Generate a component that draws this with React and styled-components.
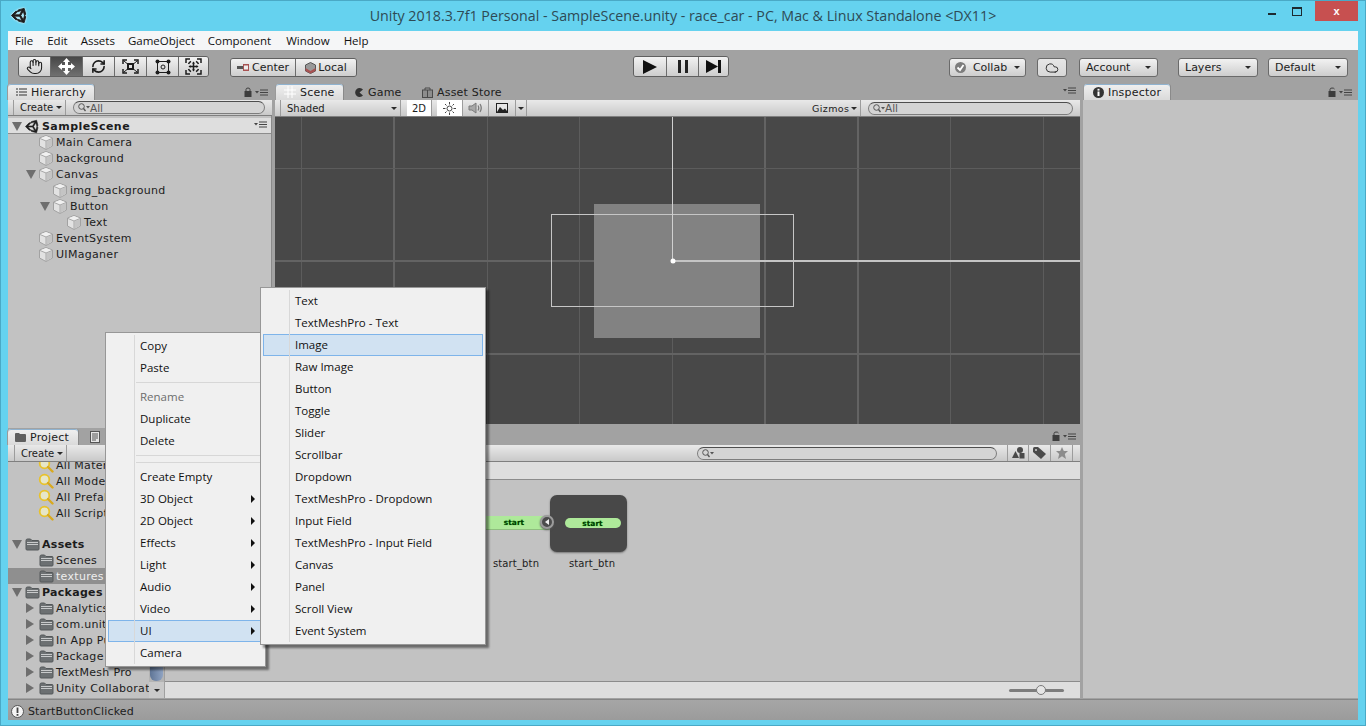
import styled, { createGlobalStyle } from "styled-components";
import { FaUnity } from "react-icons/fa";
import { Hand, RefreshCw, Cloud } from "lucide-react";

const GlobalStyle = createGlobalStyle`
  html, body {
    margin: 0;
    padding: 0;
    width: 1366px;
    height: 726px;
    overflow: hidden;
  }
`;

const Window = styled.div`
  position: relative;
  width: 1366px;
  height: 726px;
  box-sizing: border-box;
  background: #65d2ef;
  border: 1px solid #4aa9c6;
  display: flex;
  flex-direction: column;
  font-family: "DejaVu Sans", sans-serif;
  font-size: 11px;
  color: #1c1c1c;
  overflow: hidden;
`;

const TitleBar = styled.div`
  height: 30px;
  flex: none;
  display: grid;
  grid-template-columns: 1fr auto 1fr;
  align-items: start;
`;

const AppLogo = styled.div`
  padding: 6px 0 0 10px;
  display: flex;
  svg { filter: drop-shadow(0 0 1px #fff); }
`;

const TitleText = styled.div`
  font-family: "Open Sans", sans-serif;
  font-size: 14.25px;
  line-height: 30px;
  color: #2e4a55;
  white-space: nowrap;
`;

const WinControls = styled.div`
  justify-self: end;
  display: flex;
  align-items: flex-start;
  padding-right: 7px;
`;

const WinMin = styled.div`
  width: 8px;
  height: 2px;
  background: #1d2a30;
  margin: 12px 16px 0 0;
`;

const WinMax = styled.div`
  width: 8px;
  height: 6px;
  border: 1px solid #1d2a30;
  border-top-width: 2px;
  margin: 6px 13px 0 0;
`;

const WinClose = styled.div`
  width: 43px;
  height: 20px;
  background: #c75050;
  color: #fff;
  font: bold 11px "Liberation Sans", sans-serif;
  line-height: 20px;
  text-align: center;
`;

const Client = styled.div`
  flex: 1;
  margin: 0 7px 5px;
  background: #a2a2a2;
  display: flex;
  flex-direction: column;
  min-height: 0;
`;

const MenuBar = styled.div`
  height: 19px;
  flex: none;
  background: #f5f6f7;
  display: flex;
  font-family: "Open Sans", sans-serif;
  font-size: 11.5px;
  line-height: 19px;
  color: #111;
`;

const MenuBarItem = styled.span`
  margin-left: ${(p) => p.$ml}px;
  white-space: nowrap;
`;

const MainToolbar = styled.div`
  height: 34px;
  flex: none;
  box-sizing: border-box;
  padding: 6px 0 0 10px;
  display: flex;
  align-items: flex-start;
`;

const BtnGroup = styled.div`
  display: flex;
  flex: none;
  height: ${(p) => p.$h || 19}px;
  margin: ${(p) => p.$m || "0"};
  box-sizing: border-box;
  border: 1px solid #5f5f5f;
  border-radius: 3px;
  overflow: hidden;
`;

const ToolBtn = styled.div`
  width: ${(p) => p.$w}px;
  flex: none;
  box-sizing: border-box;
  display: flex;
  align-items: center;
  justify-content: center;
  gap: 2px;
  color: ${(p) => (p.$active ? "#fff" : "#1c1c1c")};
  background: ${(p) =>
    p.$active
      ? "linear-gradient(#474747, #707070)"
      : "linear-gradient(#f2f2f2, #cdcdcd)"};
  & + & {
    border-left: 1px solid #6c6c6c;
  }
`;

const DropBtn = styled.div`
  width: ${(p) => p.$w}px;
  height: 19px;
  flex: none;
  box-sizing: border-box;
  margin: 2px 0 0 ${(p) => p.$ml || 0}px;
  padding: 0 ${(p) => p.$pad || 6}px;
  display: flex;
  align-items: center;
  justify-content: ${(p) => (p.$center ? "center" : "space-between")};
  border: 1px solid #6a6a6a;
  border-radius: 3px;
  background: ${(p) =>
    p.$pressed
      ? "linear-gradient(#e6e6e6, #d8d8d8)"
      : "linear-gradient(#f2f2f2, #cdcdcd)"};
  white-space: nowrap;
`;

const Caret = styled.i`
  display: inline-block;
  width: 0;
  height: 0;
  flex: none;
  border-left: 3px solid transparent;
  border-right: 3px solid transparent;
  border-top: 3px solid #2a2a2a;
`;

const Workspace = styled.div`
  flex: 1;
  min-height: 0;
  display: grid;
  grid-template-columns: 1072px 275px;
  column-gap: 3px;
`;

const LeftArea = styled.div`
  display: flex;
  flex-direction: column;
  min-height: 0;
`;

const TopPanels = styled.div`
  height: 344px;
  flex: none;
  display: flex;
  gap: 3px;
`;

const Panel = styled.div`
  width: ${(p) => (p.$w ? `${p.$w}px` : "auto")};
  flex: ${(p) => (p.$w ? "none" : "1")};
  display: flex;
  flex-direction: column;
  min-width: 0;
  min-height: 0;
`;

const TabStrip = styled.div`
  height: ${(p) => p.$h || 16}px;
  flex: none;
  display: flex;
  align-items: flex-end;
  position: relative;
  padding-left: ${(p) => p.$pad || 0}px;
`;

const Tab = styled.div`
  width: ${(p) => p.$w}px;
  height: 16px;
  box-sizing: border-box;
  display: flex;
  align-items: center;
  gap: 4px;
  padding-left: ${(p) => p.$pl || 5}px;
  letter-spacing: 0.2px;
  color: #202020;
  white-space: nowrap;
  border-radius: 3px 3px 0 0;
  ${(p) =>
    p.$active
      ? `background: linear-gradient(#f0f0f0, #dadada);
         box-shadow: inset 0 1px 0 #8fb2cf, 1px 0 0 #8a8a8a, -1px 0 0 #9a9a9a;`
      : ""}
`;

const PaneMenu = styled.div`
  position: absolute;
  right: ${(p) => p.$r || 4}px;
  top: 3px;
  display: flex;
  align-items: center;
  gap: 3px;
`;

const Bar = styled.div`
  height: ${(p) => p.$h || 16}px;
  flex: none;
  box-sizing: border-box;
  display: flex;
  align-items: center;
  background: linear-gradient(#e9e9e9, #c9c9c9);
  border-bottom: 1px solid #7f7f7f;
  font-size: 10px;
`;

const BarBtn = styled.div`
  width: ${(p) => p.$w}px;
  margin-left: ${(p) => p.$ml || 0}px;
  height: 100%;
  box-sizing: border-box;
  padding: ${(p) => (p.$center ? "0" : `0 3px 0 ${p.$pl || 7}px`)};
  display: flex;
  align-items: center;
  justify-content: ${(p) => (p.$center ? "center" : "space-between")};
  border-left: 1px solid #9c9c9c;
  border-right: 1px solid #9c9c9c;
  background: ${(p) => (p.$on ? "#fff" : "transparent")};
  font-size: ${(p) => p.$fs || 10}px;
  letter-spacing: ${(p) => p.$ls || 0}px;
  flex: none;
  & + & { border-left: none; }
`;

const Search = styled.div`
  width: ${(p) => p.$w}px;
  height: 13px;
  margin-left: ${(p) => p.$ml || 0}px;
  box-sizing: border-box;
  flex: none;
  padding-left: 4px;
  display: flex;
  align-items: center;
  font-size: 10.5px;
  color: #555;
  background: #d4d4d4;
  border: 1px solid #7d7d7d;
  border-top-color: #4e4e4e;
  border-radius: 7px;
`;

const TreePane = styled.div`
  flex: 1;
  min-height: 0;
  background: #c2c2c2;
  overflow: hidden;
  border-right: 1px solid #8a8a8a;
`;

const SceneHeader = styled.div`
  height: 16px;
  margin-top: 2px;
  padding: 1px 0 0 4px;
  display: flex;
  align-items: center;
  position: relative;
  background: #dedede;
  font-weight: bold;
  letter-spacing: 0.45px;
  border-bottom: 1px solid #8c8c8c;
  box-sizing: border-box;
`;

const Row = styled.div`
  height: 16px;
  padding-left: ${(p) => p.$indent}px;
  display: flex;
  align-items: center;
  white-space: nowrap;
  letter-spacing: 0.3px;
  font-weight: ${(p) => (p.$bold ? "bold" : "normal")};
  background: ${(p) => (p.$selected ? "#8f8f8f" : "transparent")};
  color: ${(p) => (p.$selected ? "#eee" : "#1c1c1c")};
`;

const TreeGap = styled.div`
  height: 15px;
`;

const FoldSlot = styled.span`
  width: 12px;
  height: 16px;
  flex: none;
  display: flex;
  align-items: center;
  justify-content: flex-start;
`;

const IconSlot = styled.span`
  width: 16px;
  height: 16px;
  flex: none;
  margin-right: 2px;
  display: flex;
  align-items: center;
  justify-content: center;
`;

const FoldArrow = styled.i`
  display: block;
  width: 0;
  height: 0;
  ${(p) =>
    p.$open
      ? `border-left: 5px solid transparent;
         border-right: 5px solid transparent;
         border-top: 9px solid #6e6e6e;`
      : `border-top: 5px solid transparent;
         border-bottom: 5px solid transparent;
         border-left: 8px solid #6e6e6e;`}
`;

const SceneView = styled.div`
  height: 307px;
  flex: none;
  background: #484848;
  svg { display: block; }
`;

const ProjectBody = styled.div`
  flex: 1;
  min-height: 0;
  display: flex;
`;

const ProjectTree = styled.div`
  width: 157px;
  flex: none;
  display: flex;
  background: #c2c2c2;
  border-right: 1px solid #a0a0a0;
  box-sizing: border-box;
`;

const TreeList = styled.div`
  flex: 1;
  min-width: 0;
  overflow: hidden;
`;

const TreeScroll = styled.div`
  margin-top: -5px;
`;

const Scrollbar = styled.div`
  width: 15px;
  flex: none;
  display: flex;
  flex-direction: column;
  justify-content: flex-end;
  background: #b4b4b4;
`;

const ScrollThumb = styled.div`
  width: 13px;
  height: 180px;
  margin: 0 auto 1px;
  border-radius: 0 0 6px 6px;
  background: linear-gradient(90deg, #5f7596, #8fa3c2);
`;

const ScrollEnd = styled.div`
  height: 16px;
  display: flex;
  align-items: center;
  justify-content: center;
  background: #c9c9c9;
`;

const AssetPane = styled.div`
  flex: 1;
  min-width: 0;
  display: flex;
  flex-direction: column;
`;

const Breadcrumb = styled.div`
  height: 18px;
  flex: none;
  box-sizing: border-box;
  background: #dedede;
  border-bottom: 1px solid #8c8c8c;
`;

const AssetGrid = styled.div`
  flex: 1;
  min-height: 0;
  background: #c2c2c2;
  padding: 15px 0 0 313px;
  display: flex;
  align-items: flex-start;
  box-sizing: border-box;
`;

const Tile = styled.div`
  width: ${(p) => p.$w}px;
  flex: none;
  position: relative;
`;

const TilePreview = styled.div`
  height: 57px;
  display: flex;
  align-items: center;
`;

const SpriteBar = styled.div`
  width: 100%;
  height: 13px;
  margin-top: -2px;
  display: flex;
  align-items: center;
  justify-content: center;
  background: #aee99a;
  border-bottom: 1px solid #8fbf7f;
  font-size: 7.5px;
  font-weight: bold;
  color: #053a05;
  text-shadow: 0 0 1px #1fcf1f;
`;

const SpriteSheet = styled.div`
  width: 77px;
  height: 57px;
  display: flex;
  align-items: center;
  justify-content: center;
  background: #484848;
  border-radius: 7px;
  box-shadow: 0 1px 2px #777;
`;

const SpritePill = styled.div`
  width: 56px;
  height: 10px;
  margin: -1px 0 0 8px;
  display: flex;
  align-items: center;
  justify-content: center;
  background: #aee99a;
  border-radius: 5px;
  font-size: 7.5px;
  font-weight: bold;
  color: #053a05;
  text-shadow: 0 0 1px #1fcf1f;
`;

const ExpandBtn = styled.div`
  position: absolute;
  z-index: 1;
  right: -4px;
  top: 20px;
  width: 14px;
  height: 14px;
  box-sizing: border-box;
  display: flex;
  align-items: center;
  justify-content: center;
  border-radius: 50%;
  background: #4c4c4c;
  border: 2px solid #9b9b9b;
  box-shadow: 0 1px 2px #555;
  &::after {
    content: "";
    border-top: 3px solid transparent;
    border-bottom: 3px solid transparent;
    border-right: 4px solid #eee;
  }
`;

const TileLabel = styled.div`
  padding-left: ${(p) => p.$shift || 0}px;
  margin-top: 6px;
  text-align: center;
  font-size: 10px;
  letter-spacing: 0.15px;
  white-space: nowrap;
`;

const BottomBar = styled.div`
  height: 17px;
  flex: none;
  box-sizing: border-box;
  background: #dedede;
  border-top: 1px solid #8c8c8c;
  display: flex;
  align-items: center;
  justify-content: flex-end;
  padding-right: 16px;
`;

const SliderTrack = styled.div`
  width: 55px;
  height: 3px;
  position: relative;
  border-radius: 2px;
  background: #7d7d7d;
`;

const SliderThumb = styled.div`
  position: absolute;
  left: 27px;
  top: -4px;
  width: 10px;
  height: 10px;
  box-sizing: border-box;
  border-radius: 50%;
  background: #e6e6e6;
  border: 1px solid #7a7a7a;
`;

const InspectorBody = styled.div`
  flex: 1;
  background: #c2c2c2;
`;

const StatusBar = styled.div`
  height: 21px;
  flex: none;
  margin-top: 1px;
  box-sizing: border-box;
  padding: 2px 0 0 3px;
  display: flex;
  align-items: center;
  gap: 4px;
  letter-spacing: 0.14px;
  background: linear-gradient(#a6a6a6, #9b9b9b);
  border-top: 1px solid #858585;
`;

const PopupMenu = styled.div`
  position: absolute;
  left: ${(p) => p.$left}px;
  top: ${(p) => p.$top}px;
  width: ${(p) => p.$w}px;
  z-index: ${(p) => p.$z};
  box-sizing: border-box;
  padding: 2px 0;
  display: flex;
  flex-direction: column;
  background: #f0f0f0;
  border: 1px solid #979797;
  box-shadow: 3px 3px 2px rgba(0, 0, 0, 0.45);
  font-family: "Open Sans", sans-serif;
  font-size: 11.5px;
  color: #111;
  &::before {
    content: "";
    position: absolute;
    left: 28px;
    top: 2px;
    bottom: 2px;
    width: 1px;
    background: #d8d8d8;
    z-index: 1;
  }
`;

const PopupItem = styled.div`
  height: 22px;
  flex: none;
  box-sizing: border-box;
  margin: 0 2px;
  padding: 0 7px 1px 31px;
  display: flex;
  align-items: center;
  justify-content: space-between;
  white-space: nowrap;
  color: ${(p) => (p.$disabled ? "#6d6d6d" : "#111")};
  border: 1px solid ${(p) => (p.$active ? "#7eb4ea" : "transparent")};
  background: ${(p) => (p.$active ? "#d1e2f2" : "transparent")};
`;

const PopupSep = styled.div`
  height: 7px;
  flex: none;
  display: flex;
  align-items: center;
  margin-left: 30px;
  &::after {
    content: "";
    flex: 1;
    height: 1px;
    background: #d7d7d7;
  }
`;

const SubArrow = styled.i`
  width: 0;
  height: 0;
  border-top: 4px solid transparent;
  border-bottom: 4px solid transparent;
  border-left: 4px solid #111;
`;

const Cube = () => (
  <svg width="14" height="15" viewBox="0 0 14 15">
    <path d="M7 0.500 13.500 3V11L7 14.500 0.500 11V3Z" fill="#e2e2e2" stroke="#a2a2a2" />
    <path d="M1 3.500 7 6 13 3.500 7 1Z" fill="#f0f0f0" />
    <path d="M7.500 6.500 13 4V10.700L7.500 13.700Z" fill="#c4c4c4" />
    <path d="M1 3.500 7 6 13 3.500M7 6V14" fill="none" stroke="#a8a8a8" />
  </svg>
);

const Folder = () => (
  <svg width="15" height="13" viewBox="0 0 15 13">
    <path d="M1 2.500Q1 1 2.500 1H5.500L7 2.500H13Q14 2.500 14 3.500V11Q14 12 13 12H2Q1 12 1 11Z" fill="#6c7072" stroke="#54585a" />
    <path d="M2 4.500H13M2 6.500H13" stroke="#c8cacb" />
  </svg>
);

const FavSearch = () => (
  <svg width="16" height="16" viewBox="0 0 16 16">
    <circle cx="6.500" cy="6.500" r="4.800" fill="#e6e6c8" stroke="#e8c22b" strokeWidth="1.800" />
    <path d="M10 10 14.500 14.500" stroke="#d9a91e" strokeWidth="2.400" strokeLinecap="round" />
  </svg>
);

const Lock = ({ open }) => (
  <svg width="8" height="10" viewBox="0 0 8 10">
    <rect x="0.500" y="4" width="7" height="6" fill="#3d3d3d" />
    <path d={open ? "M2 4V2.500Q2 1 4 1 6 1 6.500 2" : "M2 4V2.500Q2 1 4 1 6 1 6 2.500V4"} fill="none" stroke="#3d3d3d" />
  </svg>
);

const PaneGlyph = () => (
  <svg width="13" height="7" viewBox="0 0 13 7">
    <path d="M0 2H4L2 4.500Z" fill="#444" />
    <path d="M5 1H13M5 3.500H13M5 6H13" stroke="#444" />
  </svg>
);

const ScaleIcon = () => (
  <svg width="17" height="15" viewBox="0 0 17 15" fill="none" stroke="#1c1c1c">
    <rect x="6" y="5" width="5" height="5" strokeWidth="2" />
    <path d="M1 5V1H5M16 5V1H12M1 10V14H5M16 10V14H12" strokeWidth="1.500" />
    <path d="M2 2 5 4.500M15 2 12 4.500M2 13 5 10.500M15 13 12 10.500" />
  </svg>
);

const RectIcon = () => (
  <svg width="16" height="16" viewBox="0 0 16 16" fill="#1c1c1c">
    <rect x="2.500" y="2.500" width="11" height="11" fill="none" stroke="#1c1c1c" />
    <circle cx="2.500" cy="2.500" r="2" />
    <circle cx="13.500" cy="2.500" r="2" />
    <circle cx="2.500" cy="13.500" r="2" />
    <circle cx="13.500" cy="13.500" r="2" />
    <circle cx="8" cy="8" r="2" fill="none" stroke="#1c1c1c" />
  </svg>
);

const MoveIcon = () => (
  <svg width="17" height="17" viewBox="0 0 17 17" fill="#fff">
    <path d="M8.500 0 12 4H10V7H13V5L17 8.500 13 12V10H10V13H12L8.500 17 5 13H7V10H4V12L0 8.500 4 5V7H7V4H5Z" />
  </svg>
);

const TransformIcon = () => (
  <svg width="17" height="17" viewBox="0 0 17 17" fill="none" stroke="#1c1c1c">
    <path d="M3.500 6A5.500 5.500 0 0 1 6 3.300M11 3.300A5.500 5.500 0 0 1 13.500 6M13.500 11A5.500 5.500 0 0 1 11 13.700M6 13.700A5.500 5.500 0 0 1 3.500 11" strokeWidth="1.500" />
    <path d="M1 5V1H5M16 5V1H12M1 12V16H5M16 12V16H12" strokeWidth="1.500" />
    <path d="M8.500 5V12M5 8.500H12" strokeWidth="1.500" />
    <path d="M8.500 3.500 10 5.500H7ZM8.500 13.500 10 11.500H7ZM3.500 8.500 5.500 7V10ZM13.500 8.500 11.500 7V10Z" fill="#1c1c1c" stroke="none" />
  </svg>
);

const PivotIcon = () => (
  <svg width="13" height="9" viewBox="0 0 13 9">
    <rect x="0" y="3" width="6" height="3" fill="#555" />
    <rect x="6" y="1" width="6" height="7" fill="#a85252" />
    <rect x="7" y="2.500" width="4" height="4" fill="#eee" />
  </svg>
);

const LocalIcon = () => (
  <svg width="11" height="12" viewBox="0 0 11 12">
    <path d="M5.500 0.500 10.500 3V9L5.500 11.500 0.500 9V3Z" fill="#999" stroke="#555" />
    <path d="M0.500 6 5.500 9 10.500 6V9L5.500 11.500 0.500 9Z" fill="#a85252" />
  </svg>
);

const SceneTabIcon = () => (
  <svg width="12" height="12" viewBox="0 0 12 12" stroke="#fff">
    <path d="M0 4H12M0 8H12M4 0V12M8 0V12" />
  </svg>
);

const GameTabIcon = () => (
  <svg width="9" height="9" viewBox="0 0 9 9">
    <path d="M8 1.500A4.500 4.500 0 1 0 8 7.500L4.500 4.500Z" fill="#333" />
  </svg>
);

const StoreTabIcon = () => (
  <svg width="11" height="11" viewBox="0 0 11 11">
    <rect x="0.500" y="3" width="10" height="7.500" fill="#8d8d8d" stroke="#4a4a4a" />
    <path d="M3 3V1H8V3" fill="none" stroke="#4a4a4a" />
    <path d="M5.500 3V10" stroke="#4a4a4a" />
  </svg>
);

const SunIcon = () => (
  <svg width="13" height="13" viewBox="0 0 13 13" fill="none" stroke="#444">
    <circle cx="6.500" cy="6.500" r="2.500" />
    <path d="M6.500 0V2.500M6.500 10.500V13M0 6.500H2.500M10.500 6.500H13M2 2 3.500 3.500M9.500 9.500 11 11M2 11 3.500 9.500M9.500 3.500 11 2" />
  </svg>
);

const AudioIcon = () => (
  <svg width="15" height="12" viewBox="0 0 15 12" fill="none" stroke="#7a7a7a">
    <path d="M1 4H4L8 1V11L4 8H1Z" fill="#a8a8a8" />
    <path d="M10 3.500Q11.500 6 10 8.500M12 2Q14.500 6 12 10" strokeWidth="1.300" />
  </svg>
);

const ImageIcon = () => (
  <svg width="12" height="10" viewBox="0 0 12 10">
    <rect x="0" y="0" width="12" height="10" fill="#222" />
    <rect x="1" y="1" width="10" height="8" fill="#e6e6e6" />
    <path d="M1 9 4 4 7 7 9 5.500 11 8V9Z" fill="#222" />
  </svg>
);

const SearchGlyph = () => (
  <svg width="12" height="9" viewBox="0 0 12 9" fill="none" stroke="#555">
    <circle cx="3.500" cy="3.500" r="2.800" />
    <path d="M5.500 5.500 7.500 8" strokeWidth="1.300" />
    <path d="M8 3H12L10 5.500Z" fill="#555" stroke="none" />
  </svg>
);

const TypeFilterIcon = () => (
  <svg width="13" height="12" viewBox="0 0 13 12" fill="#4a4a4a">
    <circle cx="8" cy="3" r="3" />
    <path d="M3.500 4 7 11H0Z" />
    <rect x="7.500" y="6" width="5" height="5.500" />
  </svg>
);

const TagIcon = () => (
  <svg width="13" height="12" viewBox="0 0 13 12">
    <path d="M0 1.500Q0 0 1.500 0H5L13 7 8 12 0 5Z" fill="#4a4a4a" />
    <circle cx="3" cy="3" r="1" fill="#d0d0d0" />
  </svg>
);

const StarIcon = () => (
  <svg width="12" height="12" viewBox="0 0 12 12">
    <path d="M6 0 7.800 4H12L8.800 7 10 12 6 9.300 2 12 3.200 7 0 4H4.200Z" fill="#8c8c8c" />
  </svg>
);

const InfoIcon = () => (
  <svg width="11" height="11" viewBox="0 0 11 11">
    <circle cx="5.500" cy="5.500" r="5.500" fill="#333" />
    <rect x="4.500" y="1.800" width="2" height="1.800" fill="#fff" />
    <rect x="4.500" y="4.500" width="2" height="4.500" fill="#fff" />
  </svg>
);

const HierarchyIcon = () => (
  <svg width="11" height="8" viewBox="0 0 11 8" stroke="#333">
    <path d="M3 1H11M3 4H11M3 7H11" />
    <path d="M0 1H2M0 4H2M0 7H2" />
  </svg>
);

const ConsoleIcon = () => (
  <svg width="10" height="12" viewBox="0 0 10 12" fill="#e6e6e6" stroke="#555">
    <rect x="0.500" y="0.500" width="9" height="11" />
    <path d="M2 3H8M2 5H8M2 7H8M2 9H6" fill="none" />
  </svg>
);

const ProjectIcon = () => (
  <svg width="11" height="9" viewBox="0 0 11 9">
    <path d="M0 1Q0 0 1 0H4L5 1H10Q11 1 11 2V8Q11 9 10 9H1Q0 9 0 8Z" fill="#5f5f5f" />
  </svg>
);

const CollabCheck = () => (
  <svg width="11" height="11" viewBox="0 0 11 11">
    <circle cx="5.500" cy="5.500" r="5.500" fill="#7d7d7d" />
    <path d="M2.500 5.500 5 8 8.500 3" fill="none" stroke="#fff" strokeWidth="1.800" />
  </svg>
);

const AlertIcon = () => (
  <svg width="13" height="13" viewBox="0 0 13 13">
    <circle cx="6.500" cy="6.500" r="6" fill="#f4f4f4" stroke="#555" />
    <rect x="5.600" y="2.500" width="1.800" height="5.500" fill="#444" />
    <rect x="5.600" y="9" width="1.800" height="1.800" fill="#444" />
  </svg>
);

const PlayIcon = () => (
  <svg width="14" height="14" viewBox="0 0 14 14"><path d="M0 0 14 7 0 14Z" fill="#111" /></svg>
);

const PauseIcon = () => (
  <svg width="10" height="13" viewBox="0 0 10 13" fill="#222">
    <rect width="3" height="13" />
    <rect x="7" width="3" height="13" />
  </svg>
);

const StepIcon = () => (
  <svg width="15" height="13" viewBox="0 0 15 13" fill="#111">
    <path d="M0 0 12 6.500 0 13Z" />
    <rect x="12" width="3" height="13" />
  </svg>
);

const UnityMark = ({ size, weight }) => (
  <FaUnity size={size} color="#1d1d1d" stroke="#1d1d1d" strokeWidth={weight} />
);

const thinV = [26, 212, 304, 397, 675, 768];
const thickV = [119, 490, 583];

function SceneDrawing() {
  return (
    <svg width="805" height="307" viewBox="0 0 805 307">
      {thinV.map((x) => (
        <line key={x} x1={x + 0.5} x2={x + 0.5} y1="0" y2="307" stroke="#5c5c5c" />
      ))}
      {thickV.map((x) => (
        <line key={x} x1={x} x2={x} y1="0" y2="307" stroke="#636363" strokeWidth="2" />
      ))}
      <line x1="0" x2="805" y1="51.500" y2="51.500" stroke="#5c5c5c" />
      <line x1="0" x2="805" y1="144" y2="144" stroke="#636363" strokeWidth="2" />
      <line x1="0" x2="805" y1="237" y2="237" stroke="#636363" strokeWidth="2" />
      <rect x="319" y="87" width="166" height="134" fill="#828282" />
      <rect x="276.500" y="97.500" width="242" height="92" fill="none" stroke="#c6c6c6" />
      <line x1="397.500" x2="397.500" y1="0" y2="144" stroke="#d0d0d0" />
      <line x1="400" x2="805" y1="144" y2="144" stroke="#c4c4c4" strokeWidth="2" />
      <circle cx="398" cy="144" r="2.500" fill="#fff" />
    </svg>
  );
}

const menuEntries = [
  { name: "File", ml: 7 },
  { name: "Edit", ml: 14 },
  { name: "Assets", ml: 13 },
  { name: "GameObject", ml: 13 },
  { name: "Component", ml: 13 },
  { name: "Window", ml: 15 },
  { name: "Help", ml: 14 },
];

const hierarchy = [
  { name: "Main Camera", indent: 18 },
  { name: "background", indent: 18 },
  { name: "Canvas", indent: 18, open: true },
  { name: "img_background", indent: 32 },
  { name: "Button", indent: 32, open: true },
  { name: "Text", indent: 46 },
  { name: "EventSystem", indent: 18 },
  { name: "UIMaganer", indent: 18 },
];

const favorites = ["All Materials", "All Models", "All Prefabs", "All Scripts"];

const assets = [
  { name: "Assets", indent: 4, open: true, bold: true },
  { name: "Scenes", indent: 18 },
  { name: "textures", indent: 18, selected: true },
  { name: "Packages", indent: 4, open: true, bold: true },
  { name: "Analytics Library", indent: 18, closed: true },
  { name: "com.unity.ads", indent: 18, closed: true },
  { name: "In App Purchasing", indent: 18, closed: true },
  { name: "Package Manager UI", indent: 18, closed: true },
  { name: "TextMesh Pro", indent: 18, closed: true },
  { name: "Unity Collaborate", indent: 18, closed: true },
];

const uiItems = [
  "Text", "TextMeshPro - Text", "Image", "Raw Image", "Button", "Toggle", "Slider", "Scrollbar",
  "Dropdown", "TextMeshPro - Dropdown", "Input Field", "TextMeshPro - Input Field", "Canvas",
  "Panel", "Scroll View", "Event System",
];

const submenuItems = ["3D Object", "2D Object", "Effects", "Light", "Audio", "Video"];

export default function App() {
  return (
    <Window>
      <GlobalStyle />
      <TitleBar>
        <AppLogo>
          <UnityMark size={17} weight={30} />
        </AppLogo>
        <TitleText>
          Unity 2018.3.7f1 Personal - SampleScene.unity - race_car - PC, Mac &amp; Linux Standalone &lt;DX11&gt;
        </TitleText>
        <WinControls>
          <WinMin />
          <WinMax />
          <WinClose>x</WinClose>
        </WinControls>
      </TitleBar>

      <Client>
        <MenuBar>
          {menuEntries.map((m) => (
            <MenuBarItem key={m.name} $ml={m.ml}>{m.name}</MenuBarItem>
          ))}
        </MenuBar>

        <MainToolbar>
          <BtnGroup $h={21}>
            <ToolBtn $w={31}><Hand size={17} strokeWidth={1.5} /></ToolBtn>
            <ToolBtn $w={32} $active><MoveIcon /></ToolBtn>
            <ToolBtn $w={32}><RefreshCw size={15} strokeWidth={2.6} /></ToolBtn>
            <ToolBtn $w={32}><ScaleIcon /></ToolBtn>
            <ToolBtn $w={32}><RectIcon /></ToolBtn>
            <ToolBtn $w={30}><TransformIcon /></ToolBtn>
          </BtnGroup>
          <BtnGroup $m="2px 0 0 21px">
            <ToolBtn $w={64}><PivotIcon />Center</ToolBtn>
            <ToolBtn $w={61}><LocalIcon />Local</ToolBtn>
          </BtnGroup>
          <BtnGroup $h={21} $m="0 0 0 276px">
            <ToolBtn $w={32}><PlayIcon /></ToolBtn>
            <ToolBtn $w={32}><PauseIcon /></ToolBtn>
            <ToolBtn $w={30}><StepIcon /></ToolBtn>
          </BtnGroup>
          <DropBtn $w={77} $ml={220} $pad={5}>
            <CollabCheck />Collab<Caret />
          </DropBtn>
          <DropBtn $w={30} $ml={11} $center $pressed><Cloud size={14} strokeWidth={1.5} /></DropBtn>
          <DropBtn $w={79} $ml={12}>Account<Caret /></DropBtn>
          <DropBtn $w={80} $ml={20}>Layers<Caret /></DropBtn>
          <DropBtn $w={80} $ml={10}>Default<Caret /></DropBtn>
        </MainToolbar>

        <Workspace>
          <LeftArea>
            <TopPanels>
              <Panel $w={264}>
                <TabStrip>
                  <Tab $w={86} $active $pl={8}><HierarchyIcon />Hierarchy</Tab>
                  <PaneMenu>
                    <Lock />
                    <PaneGlyph />
                  </PaneMenu>
                </TabStrip>
                <Bar>
                  <BarBtn $w={53} $ml={5} $pl={6}>Create<Caret /></BarBtn>
                  <Search $w={192} $ml={7}><SearchGlyph />All</Search>
                </Bar>
                <TreePane>
                  <SceneHeader>
                    <FoldSlot><FoldArrow $open /></FoldSlot>
                    <IconSlot><UnityMark size={15} weight={20} /></IconSlot>
                    SampleScene
                    <PaneMenu><PaneGlyph /></PaneMenu>
                  </SceneHeader>
                  {hierarchy.map((item) => (
                    <Row key={item.name} $indent={item.indent}>
                      <FoldSlot>{item.open && <FoldArrow $open />}</FoldSlot>
                      <IconSlot><Cube /></IconSlot>
                      {item.name}
                    </Row>
                  ))}
                </TreePane>
              </Panel>

              <Panel>
                <TabStrip $pad={1}>
                  <Tab $w={67} $active $pl={8}><SceneTabIcon />Scene</Tab>
                  <Tab $w={74} $pl={12}><GameTabIcon />Game</Tab>
                  <Tab $w={100}><StoreTabIcon />Asset Store</Tab>
                  <PaneMenu><PaneGlyph /></PaneMenu>
                </TabStrip>
                <Bar $h={17}>
                  <BarBtn $w={121} $ml={5} $pl={6}>Shaded<Caret /></BarBtn>
                  <BarBtn $w={25} $ml={6} $center $on>2D</BarBtn>
                  <BarBtn $w={26} $ml={5} $center $on><SunIcon /></BarBtn>
                  <BarBtn $w={26} $center><AudioIcon /></BarBtn>
                  <BarBtn $w={27} $center><ImageIcon /></BarBtn>
                  <BarBtn $w={11} $center><Caret /></BarBtn>
                  <BarBtn $w={54} $ml={280} $pl={5} $fs={9.5} $ls={0.4}>Gizmos<Caret /></BarBtn>
                  <Search $w={205} $ml={7}><SearchGlyph />All</Search>
                </Bar>
                <SceneView><SceneDrawing /></SceneView>
              </Panel>
            </TopPanels>

            <Panel>
              <TabStrip $h={17}>
                <Tab $w={70} $active $pl={7}><ProjectIcon />Project</Tab>
                <Tab $w={30} $pl={12}><ConsoleIcon /></Tab>
                <PaneMenu>
                  <Lock open />
                  <PaneGlyph />
                </PaneMenu>
              </TabStrip>
              <Bar $h={17}>
                <BarBtn $w={53} $ml={6} $pl={6}>Create<Caret /></BarBtn>
                <Search $w={300} $ml={630}><SearchGlyph /></Search>
                <BarBtn $w={22} $ml={10} $center><TypeFilterIcon /></BarBtn>
                <BarBtn $w={22} $center><TagIcon /></BarBtn>
                <BarBtn $w={22} $center><StarIcon /></BarBtn>
              </Bar>
              <ProjectBody>
                <ProjectTree>
                  <TreeList>
                    <TreeScroll>
                      {favorites.map((name) => (
                        <Row key={name} $indent={18}>
                          <FoldSlot />
                          <IconSlot><FavSearch /></IconSlot>
                          {name}
                        </Row>
                      ))}
                      <TreeGap />
                      {assets.map((item) => (
                        <Row key={item.name} $indent={item.indent} $bold={item.bold} $selected={item.selected}>
                          <FoldSlot>
                            {item.open && <FoldArrow $open />}
                            {item.closed && <FoldArrow />}
                          </FoldSlot>
                          <IconSlot><Folder /></IconSlot>
                          {item.name}
                        </Row>
                      ))}
                    </TreeScroll>
                  </TreeList>
                  <Scrollbar>
                    <ScrollThumb />
                    <ScrollEnd><Caret /></ScrollEnd>
                  </Scrollbar>
                </ProjectTree>
                <AssetPane>
                  <Breadcrumb />
                  <AssetGrid>
                    <Tile $w={72}>
                      <TilePreview><SpriteBar>start</SpriteBar></TilePreview>
                      <ExpandBtn />
                      <TileLabel $shift={4}>start_btn</TileLabel>
                    </Tile>
                    <Tile $w={77}>
                      <TilePreview>
                        <SpriteSheet><SpritePill>start</SpritePill></SpriteSheet>
                      </TilePreview>
                      <TileLabel $shift={7}>start_btn</TileLabel>
                    </Tile>
                  </AssetGrid>
                  <BottomBar>
                    <SliderTrack><SliderThumb /></SliderTrack>
                  </BottomBar>
                </AssetPane>
              </ProjectBody>
            </Panel>
          </LeftArea>

          <Panel>
            <TabStrip $pad={1}>
              <Tab $w={86} $active $pl={9}><InfoIcon />Inspector</Tab>
              <PaneMenu $r={6}>
                <Lock open />
                <PaneGlyph />
              </PaneMenu>
            </TabStrip>
            <InspectorBody />
          </Panel>
        </Workspace>

        <StatusBar><AlertIcon />StartButtonClicked</StatusBar>
      </Client>

      <PopupMenu $left={104} $top={331} $w={161} $z={5}>
        <PopupItem>Copy</PopupItem>
        <PopupItem>Paste</PopupItem>
        <PopupSep />
        <PopupItem $disabled>Rename</PopupItem>
        <PopupItem>Duplicate</PopupItem>
        <PopupItem>Delete</PopupItem>
        <PopupSep />
        <PopupSep />
        <PopupItem>Create Empty</PopupItem>
        {submenuItems.map((name) => (
          <PopupItem key={name}>{name}<SubArrow /></PopupItem>
        ))}
        <PopupItem $active>UI<SubArrow /></PopupItem>
        <PopupItem>Camera</PopupItem>
      </PopupMenu>

      <PopupMenu $left={259} $top={286} $w={226} $z={6}>
        {uiItems.map((name) => (
          <PopupItem key={name} $active={name === "Image"}>{name}</PopupItem>
        ))}
      </PopupMenu>
    </Window>
  );
}
